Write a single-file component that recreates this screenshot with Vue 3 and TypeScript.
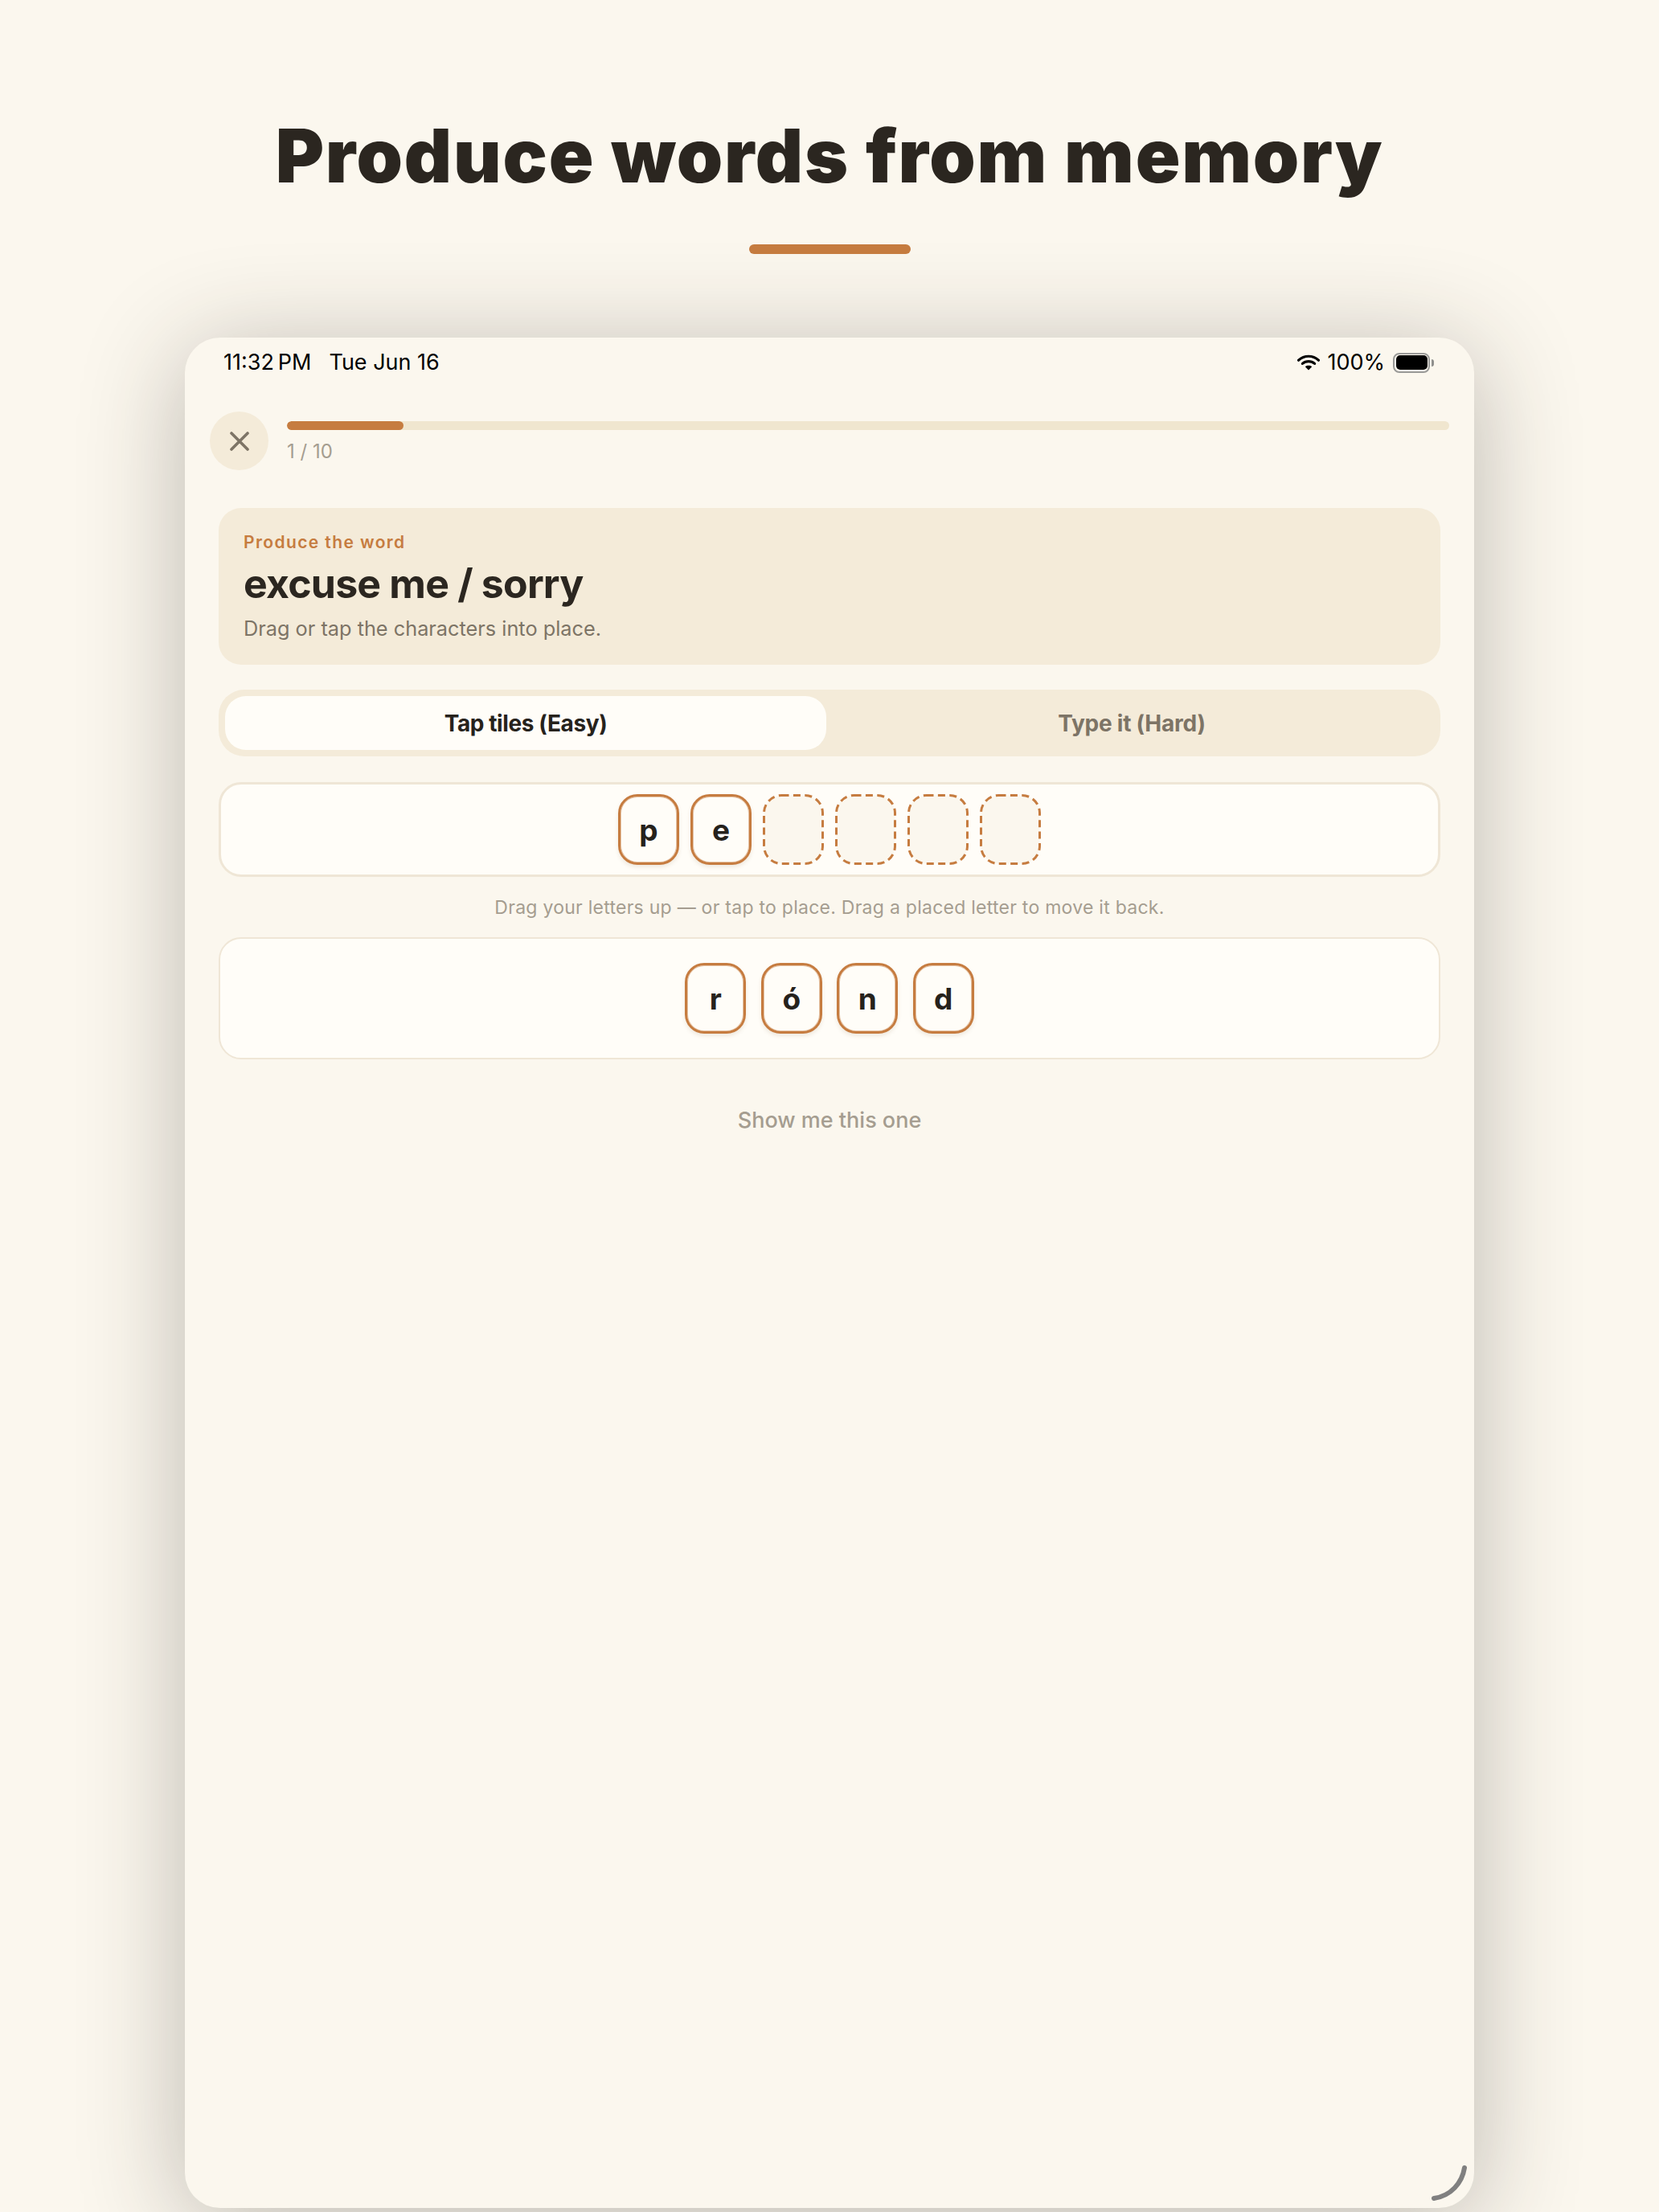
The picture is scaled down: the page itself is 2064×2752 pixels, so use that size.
<script setup lang="ts">
const placed: string[] = ['p', 'e']
const emptySlots: number[] = [1, 2, 3, 4]
const bank: string[] = ['r', 'ó', 'n', 'd']
</script>

<template>
  <div class="page">
    <header class="hero">
      <h1 class="title">Produce words from memory</h1>
      <div class="accent"></div>
    </header>

    <section class="device">
      <div class="status">
        <div class="status-left">
          <span class="clock">11:32&#8201;PM</span>
          <span>Tue Jun 16</span>
        </div>
        <div class="status-right">
          <svg class="wifi" viewBox="0 0 28 20" width="28" height="20" aria-hidden="true">
            <path d="M1.6 7.2C8.6 .6 19.4 .6 26.4 7.2" fill="none" stroke="#000" stroke-width="3.2" stroke-linecap="round" />
            <path d="M6.4 11.4C10.8 7.6 17.2 7.6 21.6 11.4" fill="none" stroke="#000" stroke-width="3.2" stroke-linecap="round" />
            <path d="M14 19.6 9.8 15.2C12.2 13.4 15.8 13.4 18.2 15.2Z" fill="#000" />
          </svg>
          <span class="pct">100%</span>
          <div class="battery">
            <div class="battery-body"><div class="battery-fill"></div></div>
            <div class="battery-nub"></div>
          </div>
        </div>
      </div>

      <div class="top-row">
        <button class="close" type="button" aria-label="Close">
          <svg viewBox="0 0 24 24" width="24" height="24" aria-hidden="true">
            <path d="M2 2 22 22M22 2 2 22" stroke="#7d7466" stroke-width="3.6" stroke-linecap="round" fill="none" />
          </svg>
        </button>
        <div class="progress-wrap">
          <div class="track"><div class="fill" :style="{ width: '10%' }"></div></div>
          <div class="count">1 / 10</div>
        </div>
      </div>

      <main class="content">
        <div class="prompt">
          <div class="eyebrow">Produce the word</div>
          <div class="word">excuse me / sorry</div>
          <div class="instr">Drag or tap the characters into place.</div>
        </div>

        <div class="segment">
          <div class="seg active">Tap tiles (Easy)</div>
          <div class="seg">Type it (Hard)</div>
        </div>

        <div class="answer">
          <div v-for="c in placed" :key="c" class="tile">{{ c }}</div>
          <div v-for="n in emptySlots" :key="n" class="slot">
            <svg viewBox="0 0 76 88" width="76" height="88" aria-hidden="true">
              <rect x="1.5" y="1.5" width="73" height="85" rx="22" ry="22" fill="#fbf7ee" stroke="#c67c40" stroke-width="3" stroke-dasharray="9 5.4" />
            </svg>
          </div>
        </div>

        <p class="hint">Drag your letters up — or tap to place. Drag a placed letter to move it back.</p>

        <div class="bank">
          <div v-for="c in bank" :key="c" class="tile">{{ c }}</div>
        </div>

        <div class="show">Show me this one</div>
      </main>

      <svg class="corner" viewBox="0 0 44 44" width="44" height="44" aria-hidden="true">
        <path d="M41 3C38 22 24 38 3 41" fill="none" stroke="#808080" stroke-width="6" stroke-linecap="round" />
      </svg>
    </section>
  </div>
</template>

<style>
html, body { margin: 0; background: #fbf7ee; }
</style>

<style scoped>
.page {
  width: 2064px;
  height: 2752px;
  overflow: hidden;
  background: #fbf7ee;
  font-family: "Inter", "Noto Sans", sans-serif;
  color: #2b2620;
  box-sizing: border-box;
  padding-top: 140px;
}
.hero { display: flex; flex-direction: column; align-items: center; }
.title {
  margin: 0;
  font-size: 92px;
  line-height: 108px;
  font-weight: 900;
  letter-spacing: 1.75px;
  color: #2b2620;
  white-space: nowrap;
}
.accent {
  width: 201px;
  height: 12px;
  border-radius: 6px;
  background: #c67c40;
  margin-top: 56px;
}
.device {
  position: relative;
  width: 1604px;
  height: 2327px;
  margin: 104px auto 0;
  border-radius: 44px;
  background: #fbf7ee;
  box-shadow: 0 18px 130px rgba(44, 38, 30, 0.3);
}
.status {
  height: 92px;
  box-sizing: border-box;
  padding: 0 50px 0 48px;
  display: flex;
  justify-content: space-between;
  align-items: flex-start;
  color: #000;
  font-size: 27px;
  line-height: 36px;
}
.status-left { display: flex; gap: 22px; padding-top: 13px; }
.status-right { display: flex; align-items: center; padding-top: 13px; height: 36px; }
.wifi { margin-right: 9px; }
.pct { margin-right: 10px; }
.battery { display: flex; align-items: center; gap: 2px; }
.battery-body {
  width: 46px;
  height: 25px;
  box-sizing: border-box;
  border: 2px solid #9a9a98;
  border-radius: 8px;
  padding: 1.5px;
}
.battery-fill { width: 100%; height: 100%; border-radius: 5px; background: #000; }
.battery-nub { width: 3px; height: 9px; border-radius: 0 3px 3px 0; background: #8f8f8d; }
.top-row { display: flex; padding: 0 31px; gap: 23px; align-items: flex-start; }
.close {
  width: 73px;
  height: 73px;
  flex: none;
  padding: 0;
  border: 0;
  border-radius: 50%;
  background: #f4ebd9;
  display: flex;
  align-items: center;
  justify-content: center;
}
.progress-wrap { flex: 1; padding-top: 12px; }
.track { height: 11px; border-radius: 6px; background: #f0e6cf; overflow: hidden; }
.fill { height: 100%; border-radius: 6px; background: #c67c40; }
.count { margin-top: 12px; font-size: 24px; line-height: 30px; color: #a59d90; }
.content { padding: 47px 42px 0; display: flex; flex-direction: column; }
.prompt {
  height: 195px;
  box-sizing: border-box;
  padding: 28px 31px 0;
  border-radius: 28px;
  background: #f4ebd9;
}
.eyebrow {
  font-size: 21px;
  line-height: 30px;
  font-weight: 600;
  letter-spacing: 1.4px;
  color: #c67c40;
}
.word {
  margin-top: 6px;
  font-size: 50px;
  line-height: 60px;
  font-weight: 700;
  letter-spacing: -0.8px;
  color: #2b2620;
}
.instr { margin-top: 9px; font-size: 25.3px; line-height: 34px; color: #7d7466; }
.segment {
  margin-top: 31px;
  height: 83px;
  box-sizing: border-box;
  padding: 8px;
  display: grid;
  grid-template-columns: 748px 1fr;
  border-radius: 32px;
  background: #f4ebd9;
}
.seg {
  display: flex;
  align-items: center;
  justify-content: center;
  border-radius: 26px;
  font-size: 28px;
  font-weight: 700;
  letter-spacing: -0.4px;
  color: #7d7466;
}
.seg:not(.active) { letter-spacing: -0.25px; padding-left: 4px; }
.seg.active { background: #fffdf8; color: #26221c; }
.answer {
  margin-top: 32px;
  box-sizing: border-box;
  padding: 12px;
  display: flex;
  justify-content: center;
  gap: 14px;
  border: 3px solid #efe6d6;
  border-radius: 28px;
  background: #fffdf8;
}
.bank {
  box-sizing: border-box;
  padding: 30px;
  display: flex;
  justify-content: center;
  gap: 18.5px;
  border: 2px solid #efe6d6;
  border-radius: 28px;
  background: #fffdf8;
}
.tile, .slot {
  width: 76px;
  height: 88px;
  box-sizing: border-box;
  border-radius: 24px;
}
.tile {
  display: flex;
  align-items: center;
  justify-content: center;
  border: 3px solid #c67c40;
  background: #fffdf8;
  box-shadow: inset 0 0 0 1px rgba(198, 124, 64, 0.45), 0 3px 5px rgba(120, 90, 50, 0.12);
  font-size: 37px;
  font-weight: 700;
  color: #26221c;
}
.slot svg { display: block; }
.hint {
  margin: 0;
  height: 75px;
  display: flex;
  align-items: center;
  justify-content: center;
  font-size: 23px;
  letter-spacing: 0.26px;
  color: #a59d90;
}
.show {
  margin-top: 59px;
  text-align: center;
  font-size: 27px;
  line-height: 34px;
  font-weight: 500;
  color: #a59d90;
}
.corner { position: absolute; right: 9px; bottom: 9px; }
</style>
